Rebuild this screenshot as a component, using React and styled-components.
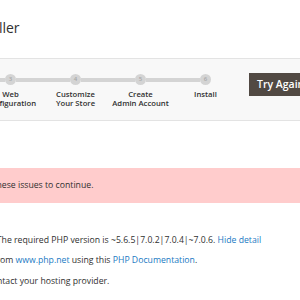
import React from "react";
import styled, { createGlobalStyle } from "styled-components";

const GlobalStyle = createGlobalStyle`
  html, body {
    margin: 0;
    padding: 0;
    background: #ffffff;
    overflow: hidden;
  }
  body {
    font-family: "Open Sans", "Liberation Sans", sans-serif;
    color: #303030;
  }
`;

const Page = styled.div`
  width: 760px;
  margin-left: -160px;
  padding-top: 19px;
`;

const Title = styled.h1`
  margin: 0 0 22px;
  padding-left: 127px;
  font-size: 14px;
  line-height: 17px;
  font-weight: 400;
  color: #303030;
`;

const NavBar = styled.nav`
  display: flex;
  align-items: flex-start;
  background: #f8f8f8;
  border-top: 1px solid #e3e3e3;
  border-bottom: 1px solid #e3e3e3;
  padding-left: 8px;
`;

const Steps = styled.ol`
  display: flex;
  margin: 0;
  padding: 15px 0 12px;
  list-style: none;
`;

const Step = styled.li`
  width: 65px;
  display: flex;
  flex-direction: column;
  align-items: center;
`;

const Track = styled.div`
  align-self: stretch;
  display: flex;
  align-items: center;
  height: 11px;
`;

const Segment = styled.span`
  flex: 1;
  height: 4px;
  background: ${(p) => (p.$off ? "transparent" : "#d4d4d4")};
`;

const Dot = styled.span`
  flex: none;
  width: 11px;
  height: 11px;
  border-radius: 50%;
  background: #d4d4d4;
  color: #a8a8a8;
  font-size: 6px;
  font-weight: 600;
  line-height: 11px;
  text-align: center;
`;

const Label = styled.span`
  margin-top: 5px;
  font-size: 7.7px;
  line-height: 9px;
  font-weight: 600;
  color: #303030;
  text-align: center;
  white-space: nowrap;
`;

const Button = styled.button`
  flex: none;
  margin: 14px 0 0 11px;
  height: 23px;
  padding: 0 8px;
  border: none;
  border-radius: 0;
  background: #514943;
  color: #ffffff;
  font-family: inherit;
  font-size: 10.5px;
  font-weight: 600;
  line-height: 23px;
  white-space: nowrap;
`;

const Banner = styled.div`
  margin-top: 47px;
  background: #ffcccc;
  padding: 10.5px 0 12px 71px;
  font-size: 8.7px;
  line-height: 12px;
  color: #303030;
`;

const Check = styled.div`
  margin-top: 31px;
  padding-left: 47px;
`;

const Para = styled.p`
  margin: 0 0 8.6px;
  font-size: 8.7px;
  line-height: 12px;
  color: #303030;
  white-space: nowrap;
`;

const Link = styled.a`
  color: #1979c3;
  text-decoration: none;
`;

const steps = [
  ["Readiness", "Check"],
  ["Add a", "Database"],
  ["Web", "Configuration"],
  ["Customize", "Your Store"],
  ["Create", "Admin Account"],
  ["Install"],
];

export default function App() {
  return (
    <>
      <GlobalStyle />
      <Page>
        <Title>Installer</Title>
        <NavBar>
          <Steps>
            {steps.map((lines, i) => (
              <Step key={i}>
                <Track>
                  <Segment $off={i === 0} />
                  <Dot>{i + 1}</Dot>
                  <Segment $off={i === steps.length - 1} />
                </Track>
                <Label>
                  {lines.map((l, j) => (
                    <React.Fragment key={j}>
                      {j > 0 && <br />}
                      {l}
                    </React.Fragment>
                  ))}
                </Label>
              </Step>
            ))}
          </Steps>
          <Button type="button">Try Again</Button>
        </NavBar>
        <Banner>You need to resolve these issues to continue.</Banner>
        <Check>
          <Para>
            Your PHP version is 5.5.38. The required PHP version is
            ~5.6.5|7.0.2|7.0.4|~7.0.6. <Link href="#">Hide detail</Link>
          </Para>
          <Para>
            Download and install PHP from <Link href="#">www.php.net</Link> using
            this <Link href="#">PHP Documentation</Link>.
          </Para>
          <Para>If you need further help, contact your hosting provider.</Para>
        </Check>
      </Page>
    </>
  );
}
